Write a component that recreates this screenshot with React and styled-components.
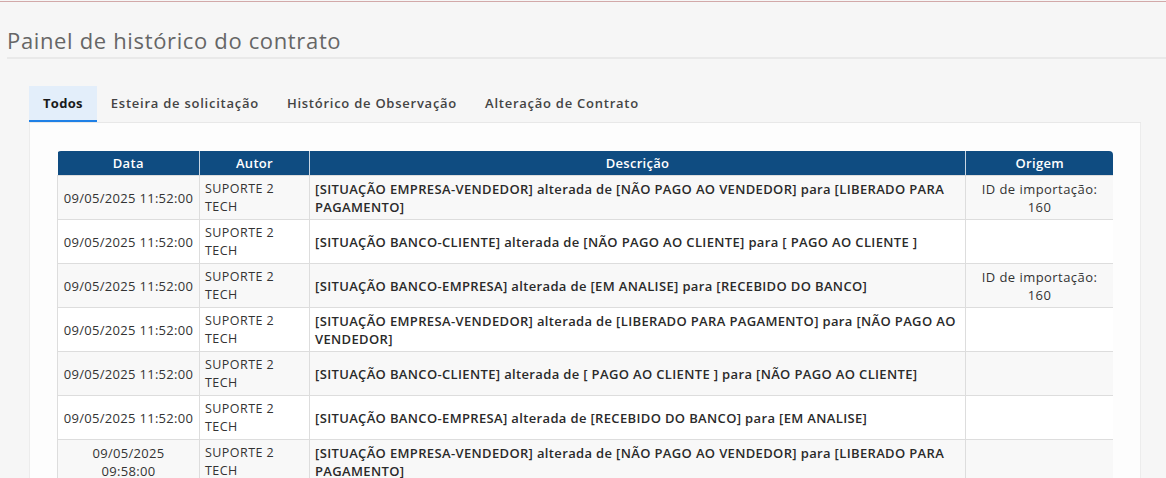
import React from "react";
import styled, { createGlobalStyle } from "styled-components";

const GlobalStyle = createGlobalStyle`
  body {
    margin: 0;
    background: #f6f6f6;
    font-family: "Open Sans", "Liberation Sans", sans-serif;
    color: #333;
  }
`;

const Page = styled.div`
  border-top: 1px solid #f6f6f6;
`;

const TopRule = styled.div`
  height: 1px;
  background: #d2a9a9;
`;

const Title = styled.h1`
  margin: 0 0 0 7px;
  padding-top: 21px;
  font-size: 22px;
  line-height: 34px;
  font-weight: 400;
  color: #666;
  letter-spacing: 0.65px;
  border-bottom: 2px solid #e9e9e9;
`;

const Content = styled.div`
  margin: 27px 25px 0 29px;
`;

const TabBar = styled.div`
  display: flex;
  border-bottom: 1px solid #e8e8e8;
`;

const Tab = styled.div`
  height: 36px;
  box-sizing: border-box;
  padding: 0 14px;
  display: flex;
  align-items: center;
  font-size: 13px;
  font-weight: ${(p) => (p.$active ? 700 : 600)};
  color: ${(p) => (p.$active ? "#1a1a1a" : "#444")};
  background: ${(p) => (p.$active ? "#e3eefa" : "transparent")};
  border-bottom: 2px solid ${(p) => (p.$active ? "#1f80e6" : "transparent")};
  letter-spacing: ${(p) => (p.$active ? "0.3px" : "0.75px")};
`;

const Panel = styled.div`
  background: #fdfdfd;
  border: 1px solid #ececec;
  border-top: none;
  padding: 28px 27px;
`;

const TableWrap = styled.div`
  border-radius: 4px 4px 0 0;
  overflow: hidden;
`;

const Table = styled.table`
  width: 100%;
  table-layout: fixed;
  border-collapse: collapse;
`;

const Th = styled.th`
  background: #0f4c81;
  color: #fff;
  font-size: 13px;
  font-weight: 600;
  height: 24px;
  padding: 0 5px;
  line-height: 18px;
  text-align: center;
  letter-spacing: 0.3px;
  border-left: 1px solid #c9d6e3;
  &:first-child {
    border-left: none;
  }
`;

const Row = styled.tr`
  background: ${(p) => (p.$odd ? "#f8f8f8" : "#ffffff")};
`;

const Td = styled.td`
  border: 1px solid #dddddd;
  height: 43px;
  box-sizing: border-box;
  padding: 4px ${(p) => (p.$tight ? "3px" : "5px")} 3px;
  font-size: ${(p) => (p.$small ? "12.5px" : "13px")};
  line-height: 18px;
  text-align: ${(p) => (p.$center ? "center" : "left")};
  vertical-align: middle;
  color: ${(p) => (p.$bold ? "#2a2a2a" : "#333")};
  font-weight: ${(p) => (p.$bold ? 600 : 400)};
  letter-spacing: ${(p) => (p.$bold ? "0.35px" : p.$tight ? "0.3px" : "0.45px")};
`;

const DateText = styled.span`
  display: inline-block;
  width: ${(p) => (p.$wrap ? "90px" : "auto")};
`;

const rows = [
  {
    date: "09/05/2025 11:52:00",
    desc: "[SITUAÇÃO EMPRESA-VENDEDOR] alterada de [NÃO PAGO AO VENDEDOR] para [LIBERADO PARA PAGAMENTO]",
    origin: "ID de importação: 160",
  },
  {
    date: "09/05/2025 11:52:00",
    desc: "[SITUAÇÃO BANCO-CLIENTE] alterada de [NÃO PAGO AO CLIENTE] para [ PAGO AO CLIENTE ]",
    origin: "",
  },
  {
    date: "09/05/2025 11:52:00",
    desc: "[SITUAÇÃO BANCO-EMPRESA] alterada de [EM ANALISE] para [RECEBIDO DO BANCO]",
    origin: "ID de importação: 160",
  },
  {
    date: "09/05/2025 11:52:00",
    desc: "[SITUAÇÃO EMPRESA-VENDEDOR] alterada de [LIBERADO PARA PAGAMENTO] para [NÃO PAGO AO VENDEDOR]",
    origin: "",
  },
  {
    date: "09/05/2025 11:52:00",
    desc: "[SITUAÇÃO BANCO-CLIENTE] alterada de [ PAGO AO CLIENTE ] para [NÃO PAGO AO CLIENTE]",
    origin: "",
  },
  {
    date: "09/05/2025 11:52:00",
    desc: "[SITUAÇÃO BANCO-EMPRESA] alterada de [RECEBIDO DO BANCO] para [EM ANALISE]",
    origin: "",
  },
  {
    date: "09/05/2025 09:58:00",
    wrap: true,
    desc: "[SITUAÇÃO EMPRESA-VENDEDOR] alterada de [NÃO PAGO AO VENDEDOR] para [LIBERADO PARA PAGAMENTO]",
    origin: "",
  },
  {
    date: "09/05/2025 09:58:00",
    wrap: true,
    desc: "[SITUAÇÃO BANCO-CLIENTE] alterada de [NÃO PAGO AO CLIENTE] para [ PAGO AO CLIENTE ]",
    origin: "",
  },
];

const tabs = ["Todos", "Esteira de solicitação", "Histórico de Observação", "Alteração de Contrato"];

export default function App() {
  return (
    <Page>
      <GlobalStyle />
      <TopRule />
      <Title>Painel de histórico do contrato</Title>
      <Content>
        <TabBar>
          {tabs.map((t, i) => (
            <Tab key={t} $active={i === 0}>
              {t}
            </Tab>
          ))}
        </TabBar>
        <Panel>
          <TableWrap>
            <Table>
              <colgroup>
                <col style={{ width: 142 }} />
                <col style={{ width: 110 }} />
                <col style={{ width: 656 }} />
                <col style={{ width: 148 }} />
              </colgroup>
              <thead>
                <tr>
                  <Th>Data</Th>
                  <Th>Autor</Th>
                  <Th>Descrição</Th>
                  <Th>Origem</Th>
                </tr>
              </thead>
              <tbody>
                {rows.map((r, i) => (
                  <Row key={i} $odd={i % 2 === 0}>
                    <Td $center $tight>
                      <DateText $wrap={r.wrap}>{r.date}</DateText>
                    </Td>
                    <Td $small>SUPORTE 2 TECH</Td>
                    <Td $bold>{r.desc}</Td>
                    <Td $center>{r.origin}</Td>
                  </Row>
                ))}
              </tbody>
            </Table>
          </TableWrap>
        </Panel>
      </Content>
    </Page>
  );
}
